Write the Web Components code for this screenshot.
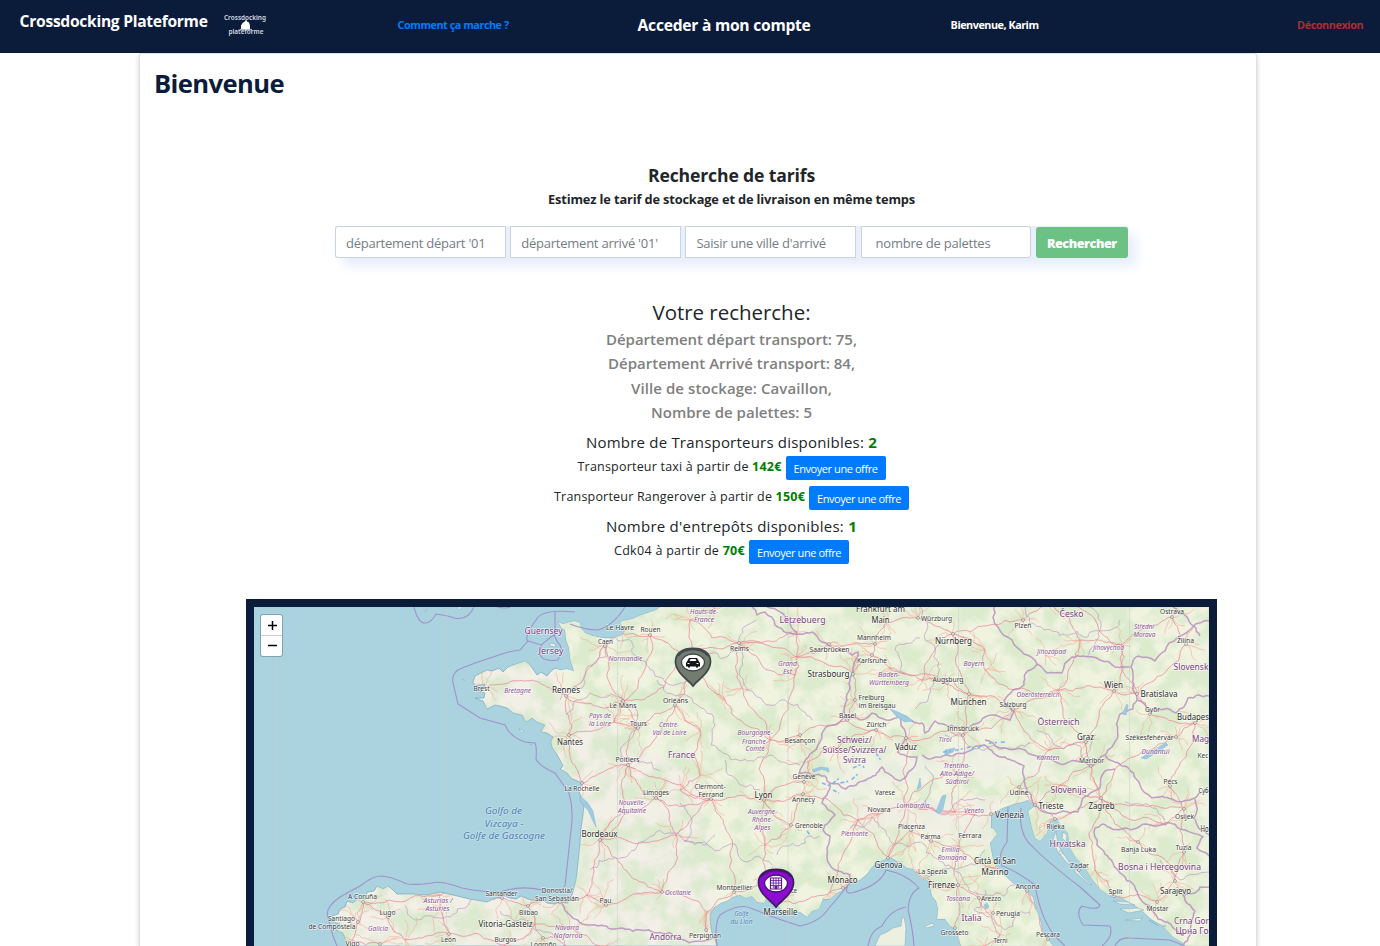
<!DOCTYPE html>
<html lang="fr">
<head>
<meta charset="utf-8">
<title>Crossdocking Plateforme</title>
<style>
html,body{margin:0;background:#fff;overflow:hidden;height:946px}
body{font-family:"Open Sans","Noto Sans",sans-serif;color:#212529}
</style>
</head>
<body>
<cdk-app></cdk-app>
<script>
const define = (name, html, setup) => {
  const t = document.createElement('template');
  t.innerHTML = html;
  customElements.define(name, class extends HTMLElement {
    connectedCallback() {
      if (this.shadowRoot) return;
      this.attachShadow({mode: 'open'}).append(t.content.cloneNode(true));
      if (setup) setup(this, this.shadowRoot);
    }
  });
};

/* One line of text tracked so that it fills the width given in "w". */
define('fit-text', `<style>:host{display:inline-block;white-space:nowrap}</style><slot></slot>`, el => {
  const w = +el.getAttribute('w'), n = el.textContent.length;
  el.style.letterSpacing = ((w - el.getBoundingClientRect().width) / n) + 'px';
});

define('cdk-logo', `<style>:host{display:block;width:44px;height:24px}svg{display:block}</style>
<svg width="44" height="24" viewBox="0 0 44 24" font-family="Noto Sans,sans-serif" font-size="6.6" fill="#d5dae3">
<path d="M17 17v-4.500l2-3 2-1 1-2.500 1 2.500 2 1 1 3v4.500z" fill="#fff"/><path d="M16 16h12v1.200H16z" fill="#aeb6c4"/>
<text x="0" y="6.800" textLength="42" lengthAdjust="spacingAndGlyphs">Crossdocking</text>
<text x="4.500" y="20.500" textLength="35" lengthAdjust="spacingAndGlyphs" font-weight="600">plateforme</text></svg>`);

define('cdk-header', `<style>
:host{display:grid;grid-template-columns:204px 174px 240px 313px 346.500px 1fr;height:53px;padding-left:19.600px;background:#0b1c3b;color:#fff;box-sizing:border-box;font-weight:600}
div{line-height:20px;padding-top:15px}
.brand{font-size:15.6px;font-weight:700;padding-top:11px}.logo{padding-top:13px}
.s{font-size:10.8px;font-weight:700}.c{font-size:15.6px;font-weight:700}
.how{color:#007bff}.out{color:#b02a32}
</style>
<div class="brand"><fit-text w="188">Crossdocking Plateforme</fit-text></div>
<div class="logo"><cdk-logo></cdk-logo></div>
<div class="s how"><fit-text w="111">Comment ça marche ?</fit-text></div>
<div class="c"><fit-text w="173">Acceder à mon compte</fit-text></div>
<div class="s"><fit-text w="88">Bienvenue, Karim</fit-text></div>
<div class="s out"><fit-text w="66">Déconnexion</fit-text></div>`);

define('cdk-field', `<style>:host{display:block;width:170.5px;height:32px}
input{box-sizing:border-box;width:100%;height:32px;border:1px solid #c9d2dd;border-radius:var(--r,0);padding:2px 0 0 var(--p,10px);font:13px "Open Sans",sans-serif;letter-spacing:-.23px;background:#fff;outline:0}
input::placeholder{color:#747d86;opacity:1}</style><input>`, (el, r) => { r.querySelector('input').placeholder = el.getAttribute('hint'); });

define('cdk-search', `<style>
:host{display:flex;gap:4.700px;width:793px;height:32px;box-shadow:8px 8px 12px #e6ecfb;background:#e9effb}
.a{--r:3px 0 0 3px}.d{--r:0 3px 3px 0;--p:14px}
button{flex:1;margin-top:1px;height:31px;border:0;border-radius:3px;background:#6cc184;color:#fff;font:800 12.6px/31px "Open Sans",sans-serif;padding:1px 0 0}
</style>
<cdk-field class="a" hint="département départ '01"></cdk-field><cdk-field class="b" hint="département arrivé '01'"></cdk-field><cdk-field class="c" hint="Saisir une ville d'arrivé"></cdk-field><cdk-field class="d" hint="nombre de palettes"></cdk-field><button><fit-text w="70">Rechercher</fit-text></button>`);

define('cdk-offer', `<style>
:host{display:flex;justify-content:center;gap:4px;height:24px;font-size:12.5px;font-weight:500;line-height:22.800px}
button{width:100px;height:24px;border:0;border-radius:2px;background:#007bff;color:#fff;font:11px/24px "Open Sans",sans-serif;padding:1px 0 0}
</style><slot></slot><button><fit-text w="84">Envoyer une offre</fit-text></button>`);

define('cdk-results', `<style>
:host{display:block;text-align:center;font-weight:500}
.t{font-size:20.5px;line-height:28px;height:29px}
.g{color:#808080;font-size:15px;line-height:24.3px;height:97.2px;display:grid;justify-content:center;justify-items:center;margin-bottom:7px;font-weight:600}
.n{font-size:15px;line-height:22px;height:22px}b{color:green;font-weight:700}
cdk-offer{margin-top:3px}cdk-offer + cdk-offer{margin-top:5.5px}
.n2{margin-top:5px}
</style>
<div class="t"><fit-text w="158">Votre recherche:</fit-text></div>
<div class="g"><fit-text w="251">Département départ transport: 75,</fit-text><fit-text w="247">Département Arrivé transport: 84,</fit-text><fit-text w="201">Ville de stockage: Cavaillon,</fit-text><fit-text w="161">Nombre de palettes: 5</fit-text></div>
<div class="n"><fit-text w="291">Nombre de Transporteurs disponibles: <b>2</b></fit-text></div>
<cdk-offer><fit-text w="204">Transporteur taxi à partir de <b>142€</b></fit-text></cdk-offer>
<cdk-offer><fit-text w="251">Transporteur Rangerover à partir de <b>150€</b></fit-text></cdk-offer>
<div class="n n2"><fit-text w="251">Nombre d'entrepôts disponibles: <b>1</b></fit-text></div>
<cdk-offer><fit-text w="131">Cdk04 à partir de <b>70€</b></fit-text></cdk-offer>`);

define('map-zoom', `<style>:host{display:block;width:21px;border-radius:2px;background:#fff;box-shadow:0 0 0 1px #7fa5b3;overflow:hidden}
svg{display:block}</style><svg width="21" height="41"><path d="M0 20.5h21" stroke="#ccc"/><path d="M7 10.5h9M11.5 6v9M7 30.5h9" stroke="#000" stroke-width="1.5"/></svg>`);

define('map-pin', `<style>:host{display:block;width:38px;height:40px}svg{display:block}.car,.depot{display:none}
:host([kind=car]) .car,:host([kind=depot]) .depot{display:inline}</style>
<svg width="38" height="40" viewBox="0 0 38 40">
<path d="M19 39C16 34 1.500 26 1.500 14.500 1.500 6 9 1.500 19 1.500S36.500 6 36.500 14.500C36.500 26 22 34 19 39z" fill="var(--c)" stroke="var(--e)" stroke-width="1.8"/>
<path d="M4 9Q9 2.500 19 2.500T34 9" fill="none" stroke="var(--e)" stroke-width="1.500"/>
<ellipse cx="19" cy="15.500" rx="11.500" ry="8.500" fill="#fff" stroke="var(--e)" stroke-width="1.300"/>
<g class="car"><path d="M12 16l1-1.500 2-3.500h8l2 3.500 1 1.500v3.500h-2v1h-2v-1h-6v1h-2v-1h-2z" fill="#151515"/><path d="M15.500 14l1-2h5l1 2z" fill="#fff"/><path d="M13.500 16.500h2M22.500 16.500h2" stroke="#fff"/></g>
<g class="depot"><path d="M13.500 10h11v11h-11z" fill="#fff" stroke="#5d1590" stroke-width="1.200"/><path d="M14 12.500h10M14 15h10M14 17.500h10M16.300 10v10M19 10v7M21.700 10v10" stroke="#5d1590" stroke-width=".8"/><path d="M17.500 18h3v3h-3z" fill="#5d1590"/></g>
</svg>`);

/* Labels: text, centre x, centre y, width. */
const CITY = `Brest,481.5,688,16|Le Havre,620,627,28|Rouen,650.5,629.5,20|Caen,605.5,641.5,15|Reims,739.5,648.5,19|Mannheim,874,637.5,34|Karlsruhe,872,660,30|Saarbrücken,829.5,649.5,40|Orléans,675.5,700,25|Le Mans,623,705.5,27|Tours,638.5,723.5,17|Besançon,800,740.5,31|Poitiers,627.5,759,24|Freiburg,871.5,697.5,26|im Breisgau,877,705.5,37|Basel,847.5,715.5,17|Zürich,876.5,724,20|Würzburg,936.5,618.5,31|Augsburg,948,679,31|Salzburg,1013,704.5,27|Plzeň,1023,625.5,17|Ostrava,1172,611,24|Žilina,1185.5,640,17|Innsbruck,963,728.5,32|Győr,1152.5,709.5,15|Székesfehérvár,1149.5,737.5,48|Kec,1203,755,11|Maribor,1091.5,760.5,25|Udine,1019,792.5,19|Pécs,1170.5,781.5,14|Суб,1203.5,790,10|Osijek,1184.5,816,19|Piacenza,911.5,826,27|Parma,930.5,836.5,20|Ferrara,970,835,23|Rijeka,1055.5,826,18|Banja Luka,1138.5,849.5,35|Tuzla,1183.5,847.5,16|La Spezia,932.5,871,29|Arezzo,991,898,20|Ancona,1027.5,886.5,24|Zadar,1079.5,865.5,19|Split,1115.5,891,14|Mostar,1157.5,908.5,22|Perugia,1008,913,24|Grosseto,954.5,932.5,28|Terni,1000.5,940,14|Pescara,1048,934.5,24|La Rochelle,582,788,35|Limoges,656,792,26|Clermont-,710,786.5,31|Ferrand,711,794.5,25|Genève,804,776.5,23|Annecy,803.5,799.5,23|Varese,885,792.5,20|Novara,879,809,23|Grenoble,809,825.5,28|Pau,605.5,900.5,12|Montpellier,734.5,887,36|ce,794,890,6|Perpignan,705,935.5,32|A Coruña,362.5,896.5,29|Lugo,387.5,912,16|Santiago,341.5,918.5,27|de Compostela,332,926.5,47|Vigo,352.5,943.5,14|León,448.5,939.5,15|Burgos,505.5,939.5,22|Santander,501.5,893,32|Bilbao,528.5,912,19|Donostia/,557,890.5,31|San Sebastián,557,898.5,44|Logroño,543.5,944.5,26`;
const BIG = `Rennes,566,689.5,28|Nantes,570,742,26|Frankfurt am,880.5,609,49|Main,880.5,619.8,18|Strasbourg,828.5,674,42|Nürnberg,953.5,641,37|München,968.5,701.5,36|Wien,1113.5,684.5,19|Bratislava,1159,694,37|Graz,1085.5,736.5,17|Budapes,1193,716.5,32|Vaduz,906,746.5,22|Trieste,1051,805.5,25|Zagreb,1101.5,805.5,26|Venezia,1009.5,814.5,29|Ho,1204.5,829,8|Genova,888.5,865,28|Città di San,995,861,42|Marino,995,871.5,27|Firenze,941.5,885,27|Sarajevo,1175.5,890.5,31|Lyon,763.5,794.5,18|Bordeaux,599.5,833.5,36|Monaco,842.5,880,30|Marseille,780.5,911.5,34|Vitoria-Gasteiz,505.5,924,54`;
const REGION = `Bretagne,517.7,689.7,27|Hauts-de-,704,611.5,28|France,704,619,20|Normandie,625.5,658.5,34|Grand,787.5,663.5,19|Est,787.5,671.5,9|Pays de,600,715.5,22|la Loire,600,723.5,22|Centre-,669,724.5,20|Val de Loire,669.5,732.5,34|Bourgogne-,755,732.5,35|Franche-,755,741,26|Comté,755,748.5,19|Baden-,889,674.5,22|Württemberg,889,682.5,40|Bayern,974,663.5,21|Jihozápad,1051.5,651,29|Jihovýchod,1108.5,647,31|Střední,1144,626.5,20|Morava,1144.5,634.5,22|Tirol,945,739,13|Oberösterreich,1038,694.5,43|Dunántúl,1155.5,751.5,28|Kärnten,1048,757.5,23|Trentino-,957,765.5,27|Alto Adige/,957,773,34|Südtirol,957,781.5,23|Lombardia,913,805,33|Veneto,974,810.5,20|Emilia-,951.5,849,20|Romagna,952,857,29|Toscana,958,898,24|Nouvelle-,632,802.5,27|Aquitaine,632,810.5,28|Auvergne-,762.5,811.5,29|Rhône-,762.5,819.5,21|Alpes,762.5,827.5,16|Piemonte,854.5,833.5,27|Occitanie,678,892.5,26|Galicia,378,928,20|Asturias /,438,900,29|Asturies,437.5,908.5,24|Navarra,567,927.5,24|- Nafarroa,566,935.5,33`;
const COUNTRY = `Guernsey,543.5,630.7,38|Jersey,551,650.5,25|Lëtzebuerg,802.5,619.5,46|France,681.5,755,27|Schweiz/,854.5,740,35|Suisse/Svizzera/,854.5,749.5,64|Svizra,854.5,760,23|Česko,1071.5,613.5,24|Slovensk,1191,666.5,35|Österreich,1058.5,721.5,42|Mag,1200.5,739,17|Slovenija,1068.5,789.5,36|Hrvatska,1067.5,843.5,36|Bosna i Hercegovina,1159.5,867,83|Italia,971.5,917.5,20|Crna Gor,1191.5,921,35|Црна Го,1192,931,33|Andorra,665.5,936.5,32`;
const SEA = `Golfo de,503.5,810.5,37|Vizcaya -,504,823,39|Golfe de Gascogne,504,835,82`;
const GULF = `Golfe,741.5,913,14|du Lion,741.5,921,22`;

/* Towns: the nodes of the road network. */
const TOWN = {br:[485,688],re:[566,696],na:[569,735],ca:[605,646],lh:[622,633],ro:[650,635],pa:[692,655],rm:[739,643],am:[690,620],li:[715,608],lu:[797,632],sa:[829,644],st:[853,674],fb:[855,700],ba:[847,720],zu:[876,730],ka:[872,655],ma:[875,644],fr:[886,622],wu:[918,618],nu:[953,634],mu:[969,694],au:[947,683],ul:[922,680],sg:[890,668],sz:[1013,709],ib:[963,735],lz:[1058,690],pl:[1023,620],pr:[1050,600],wi:[1114,691],bt:[1137,694],gy:[1150,714],bu:[1195,723],gr:[1086,742],mb:[1091,766],zg:[1101,798],lj:[1060,785],ts:[1035,805],ri:[1055,819],ud:[1019,787],ve:[991,814],vr:[955,812],pd:[975,815],bz:[958,775],mi:[905,805],tu:[858,820],no:[879,814],ge:[888,858],pc:[911,830],pm:[931,841],bo:[959,846],fi:[958,885],pe:[993,913],ar:[979,898],an:[1027,891],rn:[995,868],gs:[955,928],rm2:[985,946],te:[1000,935],ps:[1048,939],ls:[917,872],mc:[843,888],ni:[830,892],ms:[780,902],av:[765,878],mp:[734,892],pp:[706,930],nb:[707,912],to:[662,892],bd:[600,840],lr:[582,783],po:[628,765],tr:[638,728],lm:[623,701],or:[675,705],bg:[700,730],li2:[656,798],cf:[711,799],ly:[764,800],gn:[804,782],ay:[803,794],gb:[791,825],bs:[800,735],dj:[770,740],au2:[725,700],ty:[742,688],nc:[795,675],mt:[797,657],by:[587,895],pu:[606,905],sb:[560,902],bi:[528,906],sn:[502,898],gj:[440,895],ov:[440,907],le:[449,934],bu2:[505,945],vt:[535,924],lg:[543,938],pm2:[572,928],ac:[363,902],lo:[388,917],sc:[358,922],vi:[352,940],ou:[380,944],pn:[405,940],za:[600,946],an2:[614,722],br2:[676,835],os:[1184,809],pc2:[1170,786],bl:[1138,842],tz:[1184,852],sj:[1175,881],mo:[1157,902],sp:[1114,896],zd:[1079,870],kn:[1095,870],sz2:[1176,737],bn:[1122,645],os2:[1172,617],zi:[1186,644],jh:[1080,640],bv:[1045,655],ps2:[985,670],rg:[985,650],vl:[765,845],sl:[1166,825],kl:[1050,750],vd:[906,738],be:[838,748],lau:[808,762],nv:[700,775],mtl:[680,790]};
const MAIN = `br-re re-na re-lm re-ca ca-lh lh-ro ro-pa pa-am am-li pa-rm rm-mt mt-st pa-or pa-lm lm-tr or-tr tr-po po-lr po-bd na-lr na-an2 an2-tr an2-lm or-bg bg-nv nv-mtl mtl-cf cf-ly pa-au2 au2-dj dj-ly dj-bs bs-ba ba-fb fb-st st-ka ka-ma ma-fr fr-wu wu-nu nu-mu ka-sg sg-ul ul-au au-mu mu-sz sz-lz lz-wi wi-bt bt-gy gy-bu wi-gr gr-mb mb-zg mb-lj lj-ts lj-zg ts-ve ts-ri ve-pd pd-vr vr-mi mi-no no-tu tu-ge ge-pc pc-pm pm-bo bo-pd bo-rn rn-an an-ps bo-fi fi-ar ar-te te-rm2 fi-gs fi-ls ls-ge ge-mi ge-mc mc-ni ni-ms av-ms ly-vl vl-av av-mp mp-nb nb-pp nb-to to-bd to-pu pu-by bd-by by-sb sb-bi bi-sn sn-gj gj-ac ac-sc sc-vi bi-vt vt-bu2 vt-lg vt-pm2 lg-za bu2-le le-ov ov-gj le-pn pn-lo lo-ac vi-ou pm2-za po-li2 li2-br2 br2-to li2-bd li2-cf bd-br2 br2-cf ly-gn gn-lau lau-be be-zu zu-ba ly-gb gb-vl gb-ay ly-ay ay-tu rm-ty ty-dj mt-nc nc-dj lu-mt mt-sa sa-ma rm-lu nu-pl pl-pr nu-rg rg-ps2 ps2-lz pr-jh jh-bn bn-bt bn-wi bn-os2 os2-zi zi-bt bu-sz2 sz2-zg zg-os zg-bl bl-sj sj-tz tz-os sj-mo mo-sp zg-ri kn-sp kn-zg ib-mu ib-bz bz-vr ib-vd vd-zu kl-ud ud-ts kl-gr kl-sz sz-ib mi-bz mp-cf vd-mi bu-pc2 pc2-os zg-sl sl-os ro-lm am-rm ca-lm po-or cf-po nc-rm sg-mu ul-nu lz-jh gr-lz pr-bn mi-vr tu-ni`.split(' ');

const LAND = 'M660 607L656 610 650 612 641 615 632 619 622 621 620 623 625 630 622 635 613 638 603 638 593 636 585 633 581 628 580 623 575 621 570 622 563 624 558 622 561 627 565 630 566 640 569 648 570 659 574 671 567 669 560 670 555 668 550 672 547 676 541 672 537 675 533 669 530 665 525 661 519 663 513 665 508 667 503 672 499 668 492 671 487 670 481 673 475 676 473 682 475 686 485 684 483 689 478 690 485 693 484 698 475 698 483 701 487 709 491 707 495 705 500 706 507 708 513 713 522 715 526 722 532 718 537 722 545 725 541 732 547 733 553 737 551 742 552 747 556 753 560 760 563 766 560 769 567 773 572 779 583 783 578 789 581 797 584 804 583 815 581 828 580 843 578 863 576 880 572 895 567 903 560 902 554 904 547 903 543 900 536 901 528 899 521 896 516 899 510 898 504 896 493 899 487 902 470 899 453 895 440 892 427 895 412 894 397 894 392 889 388 886 383 889 377 886 374 891 367 892 366 899 358 899 353 903 347 901 345 907 340 909 338 914 332 916 334 922 340 924 336 930 343 933 345 938 348 946H717L715 939 712 933 710 919 711 912 715 907 721 903 727 901 733 897 740 895 746 898 752 896 757 902 764 903 766 899 771 903 777 904 783 912 791 914 800 912 807 917 812 911 819 909 823 899 830 899 837 893 845 889 850 884 860 880 867 874 872 867 877 863 883 860 890 857 900 863 907 868 913 869 921 878 927 880 930 887 932 896 936 901 938 909 937 919 945 919 950 926 956 930 960 943 961 946H1053L1048 939 1043 933 1040 919 1035 906 1033 897 1028 892 1020 887 1013 883 1003 874 997 867 993 859 991 849 990 843 997 834 994 829 991 828 991 816 997 811 1003 808 1014 804 1023 802 1028 800 1035 806 1028 811 1030 819 1032 828 1035 838 1040 841 1047 833 1050 821 1057 819 1061 826 1068 833 1070 848 1076 858 1084 866 1092 879 1100 889 1110 896 1120 897 1130 903 1140 909 1151 919 1163 926 1173 937 1183 943 1185 946H1209V607z';
const BORDER = ['752 607 757 615 765 612 775 625 787 633 800 634 812 632 822 642 836 650 852 655 858 652 850 678 847 700 846 716 832 725 826 727 820 742 810 754 803 765 799 774 812 775 825 776 830 785 827 795 822 803 835 815 829 822 823 830 830 836 827 848 830 865 838 871 850 875 850 886','797 632 790 623 767 607','846 716 860 720 872 713 886 720 900 715 912 721 922 723 925 733 935 721 943 724 965 727 985 717 998 716 1010 720 1014 712 1004 701 1013 690 1024 685 1025 674','1025 674 1037 664 1024 654 1012 640 998 627 994 607','1037 664 1047 673 1062 673 1072 657 1083 656 1100 660 1115 667 1131 667 1133 690 1137 700 1133 709 1120 714 1118 735 1112 747 1105 755 1092 766 1080 762 1060 764 1025 750 1000 748 985 740','1131 667 1138 656 1155 661 1165 651 1177 638 1190 630 1209 621','1137 700 1150 711 1176 713 1188 698 1209 696','1105 755 1122 766 1140 785 1152 798 1172 799 1190 800 1209 791','900 715 906 735 898 752 917 757 915 766 900 781 882 767 866 780 846 789 829 783','922 755 941 757 965 753 984 745 1005 757 1024 766 1025 786 1035 805','1035 805 1048 813 1063 811 1078 812 1083 798 1100 788 1105 771 1115 769','1102 824 1095 828 1097 845 1113 863 1123 875 1138 895 1158 919 1180 935','1102 824 1125 828 1145 824 1164 824 1185 830 1203 837 1197 848 1209 856','1195 911 1183 895 1200 887 1209 887','1195 911 1190 935 1183 945','562 903 571 916 590 925 611 929 640 930 657 933 680 939 717 938','1173 607 1187 617 1200 636','1195 799 1194 818 1209 835'];
const ADMIN = ['612 634 640 660 655 676 684 683 706 655 740 650 756 620','566 715 590 693 618 697 637 720 620 750 660 771','657 680 684 694 712 714 711 745 730 759 770 755 800 765','745 690 770 705 790 704 812 720','740 645 740 676 748 690','590 870 635 850 660 830 680 836 705 842 735 844 743 861 772 865','680 803 692 820 684 841 706 845 715 835','405 905 415 920 440 918 465 908 495 900','500 911 525 920 535 930 565 946','925 766 930 790 920 810 945 815 985 800','850 828 872 817 879 825 895 845 925 845 945 866 985 850','925 875 960 873 988 895 1015 885','985 890 974 910 1005 930 1030 912','920 607 925 640 930 688 915 709','920 638 895 650 905 675','1025 607 1044 630 1088 637 1120 620','1087 657 1098 633 1089 607','1037 730 1055 745 1084 758 1096 735','945 735 985 750 1030 743','610 610 592 665 560 700','725 760 740 785 760 790','1125 802 1165 820','1160 860 1180 880 1209 872','777 855 799 846 820 836'];
const MARITIME = ['M414 607Q418 623 425 623Q431 623 436 614Q450 616 454 618Q468 621 474 607','M497 607Q506 609 510 607','M625 607Q613 626 598 630Q585 630 570 624M528 641Q523 638 538 617Q545 609 575 612M555 611V634L541 645 528 641 520 650Q512 651 505 653L478 662 462 668Q451 672 453 683L458 704 480 718 505 725Q510 737 525 742L535 743Q537 747 536 759Q539 766 555 773L569 793Q574 810 571 830L565 886Q560 893 542 890Q520 885 500 892Q480 892 462 888Q440 880 432 883Q420 885 407 884Q390 876 380 876Q373 876 360 886L340 897Q328 905 327 914L333 936 337 946','M541 645L540 655Q544 662 558 660Q564 647 558 643L554 635','M717 946Q714 924 720 915Q740 902 753 909Q780 920 800 926Q820 922 829 908Q845 890 851 880M851 880Q842 894 851 893Q880 886 886 870L897 873Q910 878 919 888Q909 893 908 910Q913 930 914 946M868 946Q870 931 882 926Q890 910 906 907','M1008 807L1007 842Q997 855 1002 866Q1015 870 1035 885Q1042 925 1059 940L1065 946M1021 808Q1018 835 1033 847Q1045 860 1080 887L1100 905Q1098 911 1082 906Q1075 912 1083 925L1110 926Q1114 936 1102 946M1115 946Q1119 937 1130 938L1170 940 1185 946'];

let seed = 11;
const rnd = () => (seed = (seed * 16807) % 2147483647) / 2147483647;
const wiggle = (a, b, k) => {
  const d = Math.hypot(b[0] - a[0], b[1] - a[1]);
  if (d < 5) return [b];
  const o = (rnd() - .5) * k * d, m = [(a[0] + b[0]) / 2 - (b[1] - a[1]) / d * o, (a[1] + b[1]) / 2 + (b[0] - a[0]) / d * o];
  return [...wiggle(a, m, k), ...wiggle(m, b, k)];
};
const line = (pts, k) => {
  let s = 'M' + pts[0].join(' ');
  for (let i = 1; i < pts.length; i++) s += wiggle(pts[i - 1], pts[i], k).map(p => 'L' + p[0].toFixed(1) + ' ' + p[1].toFixed(1)).join('');
  return s;
};
const pairs = s => { const n = s.split(' ').map(Number), r = []; for (let i = 0; i < n.length; i += 2) r.push([n[i], n[i + 1]]); return r; };
const labels = (data, cls, dy) => '<g class="' + cls + '">' + data.split('|').map(l => { const [t, x, y, w] = l.split(','); return `<text x="${x}" y="${+y + dy}" textLength="${w}" lengthAdjust="spacingAndGlyphs">${t}</text>`; }).join('') + '</g>';

define('cdk-map', `<style>
:host{display:block;position:relative;width:955px;height:339px;border:8px solid #0b1c3b;border-bottom:0;background:#aad3df;overflow:hidden}
svg{display:block}
text{font-family:"Noto Sans",sans-serif;text-anchor:middle;paint-order:stroke;stroke:#fff;stroke-opacity:.65;stroke-width:1.5px;stroke-linejoin:round}
.city{font-size:7.200px;fill:#3c3c3c}.big{font-size:8.600px;fill:#2c2c2c}
.region{font-size:7px;font-style:italic;fill:#8c5594}.country{font-size:8.600px;fill:#7c3d80}
.sea{font-size:9.600px;font-style:italic;fill:#4f7fb3}.sea text,.gulf text{stroke-opacity:.3}.gulf{font-size:7px;font-style:italic;fill:#4f7fb3}
map-zoom{position:absolute;left:7px;top:8px}
map-pin{position:absolute}
.p1{left:420px;top:40px;--c:#747c70;--e:#40484b}
.p2{left:503px;top:261px;--c:#8d0bd3;--e:#3d1d63}
</style><div id="m"></div><map-zoom></map-zoom><map-pin class="p1" kind="car"></map-pin><map-pin class="p2" kind="depot"></map-pin>`, (el, r) => {
  let minor = '', main = '', dots = '';
  for (const e of MAIN) { const [a, b] = e.split('-'); main += line([TOWN[a], TOWN[b]], .28); }
  for (const k in TOWN) {
    const [x, y] = TOWN[k];
    for (let i = 0; i < 5; i++) { const t = rnd() * 6.28, d = 9 + rnd() * 18; minor += line([[x, y], [x + Math.cos(t) * d, y + Math.sin(t) * d]], .4); }
  }
  for (const k of 're na ca ro rm sa st fb ba zu ka ma wu nu mu au sz ib pl wi bt gy bu gr mb zg ts ri ud ve vd ge pc pm fi pe ar an gs ps mc ms mp pp to bd lr po tr lm or li2 cf ly gn ay gb bs pu sb bi sn lg le ac lo sc ou os pc2 bl tz sj mo sp zd os2 zi sz2'.split(' '))
    dots += `<circle cx="${TOWN[k][0]}" cy="${TOWN[k][1]}" r="1.400"/>`;
  let seams = '';
  for (const x of [276, 446.5, 617.5, 788, 958.5, 1129.5]) seams += `M${x} 607V946`;
  r.getElementById('m').innerHTML = `<svg width="955" height="339" viewBox="254 607 955 339">
<defs><clipPath id="land"><path d="${LAND}"/></clipPath>
<filter id="veg" x="0" y="0" width="1" height="1" color-interpolation-filters="sRGB"><feTurbulence type="fractalNoise" baseFrequency=".045" numOctaves="6" seed="8"/><feColorMatrix values="0 0 0 0 .81  0 0 0 0 .9  0 0 0 0 .76  3.500 0 0 0 -1.350"/></filter></defs>
<path d="${LAND}" fill="#f2efe6" stroke="#79a9c6" stroke-width=".8"/>
<g clip-path="url(#land)">
<path d="M550 607H1209V946H720L700 780 560 700z" fill="#eff4de" opacity=".8"/>
<rect x="254" y="607" width="955" height="339" filter="url(#veg)" opacity=".65"/>
<path d="M845 750L905 757 975 750 1060 758 1040 775 985 780 935 775 880 790 840 805 812 800z" fill="#eef0e7" opacity=".65"/>
<path d="M850 800L930 800 1000 795 990 845 950 838 900 822 860 838z" fill="#f3efe9" opacity=".6"/>
<path d="${minor}" fill="none" stroke="#f5ae98" stroke-width=".7" opacity=".85"/>
<path d="${main}" fill="none" stroke="#ea8396" stroke-width=".85" opacity=".85"/>
<path d="${ADMIN.map(s => line(pairs(s), .5)).join('')}" fill="none" stroke="#b994bf" stroke-width=".8" opacity=".8"/>
<path d="${BORDER.map(s => line(pairs(s), .3)).join('')}" fill="none" stroke="#b58abb" stroke-width="1.500" opacity=".8"/>
</g>
<path d="M890 709l8 3 10 5 5 4-8 1-8-5zM1141 758l9-6 16-9 2 2-10 7-12 7zM1122 714l5-10 1 2-2 9zM936 812l6-16 4-1-3 14-4 5zM917 790l3-12 1 9zM812 770l8-3 8 1 1 4-7-3-8 3zM984 905l3-2 2 4-3 2zM925 800l2 6-2 1zM945 750l10-2-2 4-8 3zM580 796l8 7 5 8 3 16-4-8-4-9-8-8z" fill="#9ecbdf" stroke="#7aa9e0" stroke-width=".4"/>
<path d="M822 783l8 3 8-7 2 4 10-2 9-8M853 768l9-4 2 4M876 753l6 9M807 831l3 4M833 790l6 3M943 752l10-1 17-4 4 2 16-6 15-1" fill="none" stroke="#83b4ee" stroke-width="1.600" stroke-dasharray="4 2 2 4"/>
<path d="M875 946L880 935 887 932 893 928 901 926 902 918 904 917 906 928 905 946zM925 926l8-3 1 3-8 2zM1053 840l3-9 2 14 5 8-4 2zM1063 832l4 3-1 7-4-4zM1060 850l5 6 6 9-3-1-9-11zM1075 868l8 9 9 8-3-1-14-12zM1113 901l14 1 8 3-15-1zM1120 909l18-1 6 2-15 3zM1125 920l18-2-4 3zM1149 920l8 5 9 1-6 1zM550 643l5 1 1 3-6-1zM536 634l4-1-1 2zM424 611l3-2-1 3zM457 607l6 0-4 3zM462 679l3 1-1 1zM519 729l5 2-2 2zM528 742l4 3-3-1z" fill="#eef0df" stroke="#79a9c6" stroke-width=".5"/>
<g fill="none" stroke="#a08bc5" stroke-width="1.100" opacity=".9">${MARITIME.map(d => `<path d="${d}"/>`).join('')}</g>
<path d="${seams}" stroke="#ccc" stroke-width="1" opacity=".5"/>
<g fill="#fff" stroke="#666" stroke-width=".6">${dots}</g>
${labels(REGION, 'region', 2.8)}${labels(CITY, 'city', 2.8)}${labels(BIG, 'big', 3.3)}${labels(COUNTRY, 'country', 3.3)}${labels(SEA, 'sea', 3.7)}${labels(GULF, 'gulf', 2.8)}</svg>`;
});

define('cdk-app', `<style>
:host{display:block}
main{box-sizing:border-box;width:1118px;height:893px;margin-left:139px;border:1px solid #dee2e6;border-bottom:0;border-radius:3px 3px 0 0;box-shadow:0 2px 5px rgba(0,0,0,.2);padding-left:14px;background:#fff}
h1{margin:0;padding-top:12px;font-size:25.6px;line-height:36px;height:36px;font-weight:700;color:#0b1c3b}
section{display:flex;flex-direction:column;align-items:center;width:971px;margin-left:92px;padding-top:60px}
h2{margin:0;font-size:17.6px;line-height:26px;height:26px;font-weight:700}
h3{margin:0;font-size:12.8px;line-height:20px;height:20px;font-weight:700;padding-top:1px}
cdk-search{margin:17px 0 40px}
cdk-results{height:301px}
</style>
<cdk-header></cdk-header>
<main><h1><fit-text w="130">Bienvenue</fit-text></h1>
<section><h2><fit-text w="167">Recherche de tarifs</fit-text></h2><h3><fit-text w="367">Estimez le tarif de stockage et de livraison en même temps</fit-text></h3>
<cdk-search></cdk-search><cdk-results></cdk-results><cdk-map></cdk-map></section></main>`);
</script>
</body>
</html>
